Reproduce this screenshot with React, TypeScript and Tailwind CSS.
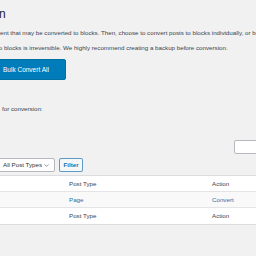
import React from 'react';
import { ChevronDown } from 'lucide-react';

const App = () => {
  return (
    <div className="w-[256px] h-[256px] overflow-hidden bg-[#f1f1f1] text-[#3c434a] font-['Liberation_Sans',Arial,sans-serif]">
      {/* Heading (cut off on the left) */}
      <div className="pt-[5px] h-[24px] whitespace-nowrap">
        <h1 className="-ml-[1px] text-[12px] leading-[18px] text-[#1d2327]">n</h1>
      </div>

      {/* Description */}
      <p className="mt-[4px] whitespace-nowrap text-[6.2px] leading-[10px]">
        ent that may be converted to blocks. Then, choose to convert posts to blocks individually, or bulk convert all.
      </p>
      <p className="mt-[5px] -ml-[3px] whitespace-nowrap text-[6.2px] leading-[10px]">
        to blocks is irreversible. We highly recommend creating a backup before conversion.
      </p>

      {/* Bulk button */}
      <div className="mt-[6px] flex">
        <button className="-ml-[14px] h-[21px] px-[16px] rounded-[2px] bg-[#007cba] border border-[#0071a1] text-white text-[6.5px] whitespace-nowrap">
          Bulk Convert All
        </button>
      </div>

      <p className="mt-[24px] ml-[2px] whitespace-nowrap text-[6.2px] leading-[10px]">for conversion:</p>

      {/* Search box */}
      <div className="mt-[26px] flex justify-end">
        <div className="w-[24px] h-[14px] mr-[-2px] bg-white border border-[#b5b8bc] rounded-l-[2px]" />
      </div>

      {/* Filters */}
      <div className="mt-[4px] flex items-center gap-[4px]">
        <div className="-ml-[4px] w-[59px] h-[14px] flex items-center justify-between pl-[6px] pr-[4px] bg-white border border-[#b5b8bc] rounded-[2px] text-[6.2px] text-[#2c3338] whitespace-nowrap">
          <span>All Post Types</span>
          <ChevronDown className="w-[7px] h-[7px] text-[#50575e]" strokeWidth={2} />
        </div>
        <button className="w-[24px] h-[14px] bg-[#f6f7f7] border border-[#2271b1]/70 rounded-[2px] text-[6.2px] font-bold text-[#2271b1]">
          Filter
        </button>
      </div>

      {/* Table */}
      <div className="mt-[3px] -mx-[4px] bg-white border-y border-[#dcdcde]">
        <div className="h-[16px] flex items-center border-b border-[#e4e4e6] text-[6.2px] whitespace-nowrap">
          <span className="ml-[73px] w-[143px]">Post Type</span>
          <span>Action</span>
        </div>
        <div className="h-[16px] flex items-center bg-[#f9f9f9] border-b border-[#e4e4e6] text-[6.2px] text-[#2271b1] whitespace-nowrap">
          <span className="ml-[73px] w-[143px]">Page</span>
          <span>Convert</span>
        </div>
        <div className="h-[16px] flex items-center text-[6.2px] whitespace-nowrap">
          <span className="ml-[73px] w-[143px]">Post Type</span>
          <span>Action</span>
        </div>
      </div>
    </div>
  );
};

export default App;
